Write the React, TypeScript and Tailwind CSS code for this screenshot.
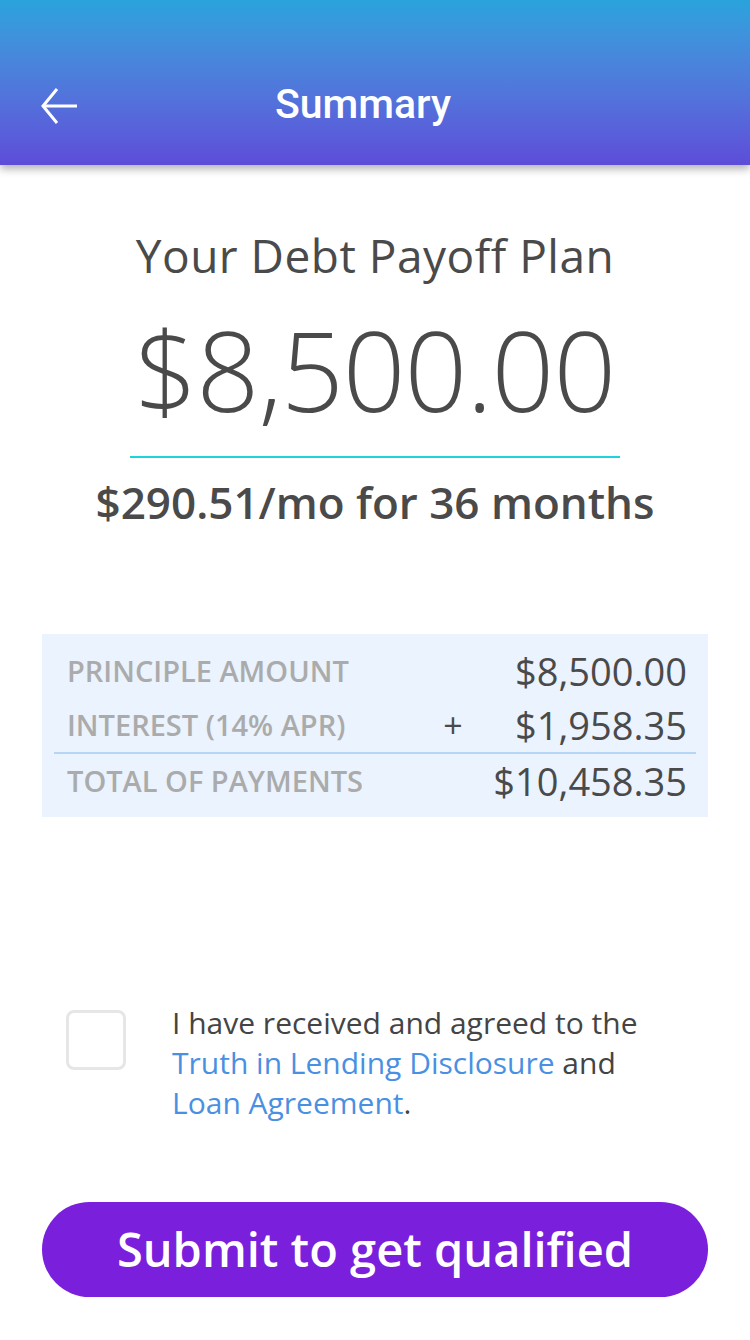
import React, { useState } from "react";

const rows = [
  { label: "PRINCIPLE AMOUNT", sign: "", value: "$8,500.00" },
  { label: "INTEREST (14% APR)", sign: "+", value: "$1,958.35" },
];

export default function App() {
  const [agreed, setAgreed] = useState(false);

  return (
    <div className="w-[750px] h-[1340px] bg-white flex flex-col font-['Open_Sans',sans-serif] text-[#4a4a4a]">
      {/* header */}
      <div className="h-[165px] bg-gradient-to-b from-[#29a3dc] to-[#5d4cd9] shadow-[0_4px_8px_rgba(0,0,0,0.3)] flex items-end pb-[40px] px-[40px] relative z-10">
        <button className="w-[38px] h-[38px] flex items-center text-white">
          <svg width="38" height="38" viewBox="0 0 38 38" fill="none" stroke="white" strokeWidth="3">
            <path d="M37 19H3" />
            <path d="M17 2L3 19l14 17" />
          </svg>
        </button>
        <h1 className="flex-1 text-center text-white text-[41px] font-medium font-['Roboto',sans-serif] leading-none pr-[62px]">
          Summary
        </h1>
      </div>

      {/* plan */}
      <div className="flex flex-col items-center pt-[67px]">
        <h2 className="text-[46px] font-normal leading-none tracking-[0.5px]">Your Debt Payoff Plan</h2>
        <div className="text-[110px] font-light leading-none mt-[36px] tracking-[-1px]">$8,500.00</div>
        <div className="w-[490px] h-[2px] bg-[#1ed3dc] mt-[32px]" />
        <div className="text-[44px] font-semibold leading-none mt-[22px]">$290.51/mo for 36 months</div>
      </div>

      {/* breakdown */}
      <div className="mx-[42px] mt-[110px] bg-[#eaf3fe] px-[12px] pt-[10px] pb-[9px]">
        {rows.map((r) => (
          <div key={r.label} className="flex items-center h-[54px] pl-[13px] pr-[9px]">
            <span className="flex-1 text-[29px] font-semibold text-[#ababab]">{r.label}</span>
            <span className="w-[40px] text-[34px] text-center text-[#4a4a4a]">{r.sign}</span>
            <span className="w-[214px] text-right text-[38px] text-[#4a4a4a]">{r.value}</span>
          </div>
        ))}
        <div className="h-[2px] bg-[#b7d5f5]" />
        <div className="flex items-center h-[54px] pl-[13px] pr-[9px]">
          <span className="flex-1 text-[29px] font-semibold text-[#ababab]">TOTAL OF PAYMENTS</span>
          <span className="text-[38px] text-[#4a4a4a]">$10,458.35</span>
        </div>
      </div>

      {/* agreement */}
      <div className="flex items-start mt-[186px] px-[66px]">
        <button
          onClick={() => setAgreed(!agreed)}
          className="w-[60px] h-[60px] shrink-0 rounded-[8px] border-[3px] border-[#e6e6e6] bg-white mt-[7px]"
        >
          {agreed ? "✓" : null}
        </button>
        <p className="ml-[46px] text-[30px] leading-[40px] text-[#444444]">
          I have received and agreed to the{" "}
          <span className="text-[#4a90e2]">Truth in Lending Disclosure</span> and{" "}
          <span className="text-[#4a90e2]">Loan Agreement</span>.
        </p>
      </div>

      {/* submit */}
      <div className="px-[42px] mt-[79px]">
        <button className="w-full h-[95px] rounded-full bg-[#7a1fdc] text-white text-[47px] font-semibold">
          Submit to get qualified
        </button>
      </div>
    </div>
  );
}
